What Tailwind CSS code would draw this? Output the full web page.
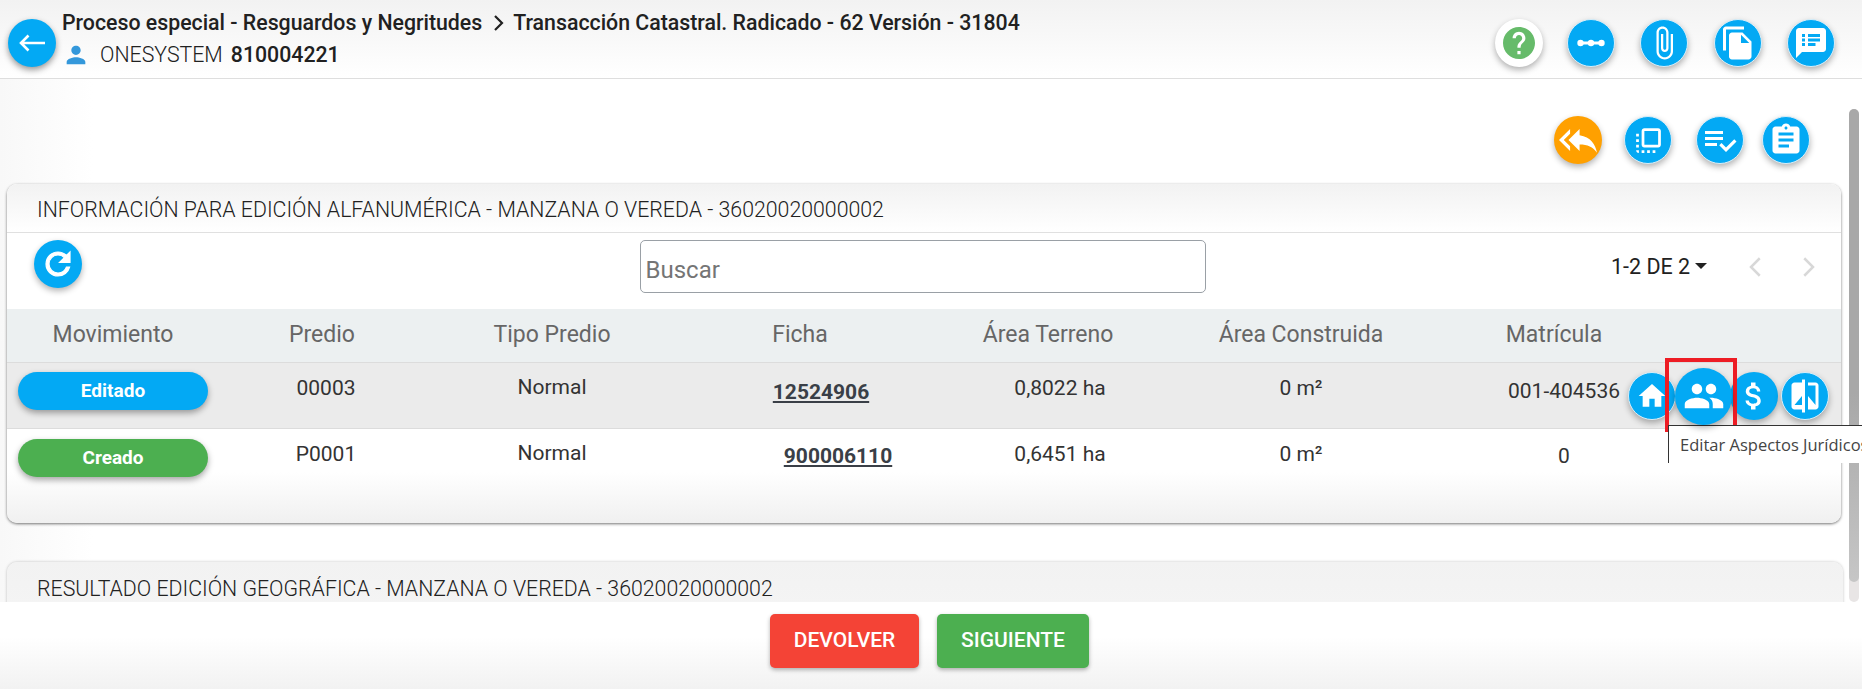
<!DOCTYPE html>
<html lang="es">
<head>
<meta charset="utf-8">
<title>Transacción Catastral</title>
<script src="https://cdn.jsdelivr.net/npm/@tailwindcss/browser@4"></script>
</head>
<body class="font-['Roboto',sans-serif] bg-white text-[#212121]">
<div class="relative flex h-[689px] w-[1862px] flex-col overflow-hidden">

  <!-- Header -->
  <header class="flex h-[79px] shrink-0 items-start border-b border-[#dedede] bg-gradient-to-b from-[#f2f2f2] to-white pl-[8px] pr-[27px]">
    <button class="mt-[19px] flex h-[48px] w-[48px] shrink-0 items-center justify-center rounded-full bg-[#03a9f4] shadow-[0_3px_6px_rgba(0,0,0,0.4)]">
      <svg viewBox="0 0 28 18" class="h-[18px] w-[28px] fill-none stroke-white stroke-[2.6]"><path d="M27 9H3M10.5 1.5L3 9l7.5 7.5"/></svg>
    </button>
    <div class="ml-[6px] mt-[9px] flex flex-col">
      <div class="flex h-[27px] items-center text-[21.3px] font-medium text-[#212121]">
        <span>Proceso especial - Resguardos y Negritudes</span>
        <svg viewBox="0 0 24 24" class="mx-[3.5px] h-[24px] w-[24px] fill-none stroke-[#212121] stroke-[2.2]"><path d="M9 5l7 7-7 7"/></svg>
        <span>Transacción Catastral. Radicado - 62 Versión - 31804</span>
      </div>
      <div class="mt-[5px] flex h-[28px] items-center text-[21.3px]">
        <svg viewBox="0 0 24 24" class="h-[28px] w-[28px] fill-[#3498db]"><path d="M12 12c2.21 0 4-1.79 4-4s-1.79-4-4-4-4 1.79-4 4 1.79 4 4 4zm0 2c-2.67 0-8 1.34-8 4v2h16v-2c0-2.66-5.33-4-8-4z"/></svg>
        <span class="ml-[10px] font-light">ONESYSTEM</span>
        <span class="ml-[8px] font-medium">810004221</span>
      </div>
    </div>
    <div class="ml-auto mt-[19px] flex items-center gap-[25.5px]">
      <button class="mr-[-2px] flex h-[48px] w-[48px] items-center justify-center rounded-full bg-white shadow-[0_3px_6px_rgba(0,0,0,0.3)]">
        <svg viewBox="2 2 20 20" class="h-[32px] w-[32px] fill-[#66bb6a]"><path d="M12 2C6.48 2 2 6.48 2 12s4.48 10 10 10 10-4.48 10-10S17.52 2 12 2zm1 17h-2v-2h2v2zm2.07-7.75l-.9.92C13.45 12.9 13 13.5 13 15h-2v-.5c0-1.1.45-2.1 1.17-2.83l1.24-1.26c.37-.36.59-.86.59-1.41 0-1.1-.9-2-2-2s-2 .9-2 2H8c0-2.21 1.79-4 4-4s4 1.79 4 4c0 .88-.36 1.68-.93 2.25z"/></svg>
      </button>
      <button class="flex h-[48px] w-[48px] items-center justify-center rounded-full border border-[#d8eef9] bg-[#03a9f4] shadow-[0_3px_6px_rgba(0,0,0,0.3)]">
        <svg viewBox="0 0 32 32" class="h-[32px] w-[32px] fill-white"><rect x="3" y="14.5" width="26" height="3" rx="1.5"/><circle cx="5.5" cy="16" r="3.2"/><circle cx="16" cy="16" r="3.2"/><circle cx="26.5" cy="16" r="3.2"/></svg>
      </button>
      <button class="flex h-[48px] w-[48px] items-center justify-center rounded-full border border-[#d8eef9] bg-[#03a9f4] shadow-[0_3px_6px_rgba(0,0,0,0.3)]">
        <svg viewBox="0 0 24 24" class="h-[36px] w-[36px] fill-white"><path d="M16.5 6v11.5c0 2.21-1.79 4-4 4s-4-1.79-4-4V5c0-1.38 1.12-2.5 2.5-2.5s2.5 1.12 2.5 2.5v10.5c0 .55-.45 1-1 1s-1-.45-1-1V6H10v9.5c0 1.38 1.12 2.5 2.5 2.5s2.5-1.12 2.5-2.5V5c0-2.21-1.79-4-4-4S7 2.79 7 5v12.5c0 3.04 2.46 5.5 5.5 5.5s5.5-2.46 5.5-5.5V6h-1.5z"/></svg>
      </button>
      <button class="flex h-[48px] w-[48px] items-center justify-center rounded-full border border-[#d8eef9] bg-[#03a9f4] shadow-[0_3px_6px_rgba(0,0,0,0.3)]">
        <svg viewBox="0 0 24 24" class="h-[36px] w-[36px] fill-white"><path d="M16 1H4c-1.1 0-2 .9-2 2v14h2V3h12V1zm-1 4l6 6v10c0 1.1-.9 2-2 2H7.99C6.89 23 6 22.1 6 21l.01-14c0-1.1.89-2 1.99-2h7zm-1 7h5.5L14 6.5V12z"/></svg>
      </button>
      <button class="flex h-[48px] w-[48px] items-center justify-center rounded-full border border-[#d8eef9] bg-[#03a9f4] shadow-[0_3px_6px_rgba(0,0,0,0.3)]">
        <svg viewBox="0 0 24 24" class="h-[36px] w-[36px] fill-white"><path d="M20 2H4c-1.1 0-1.99.9-1.99 2L2 22l4-4h14c1.1 0 2-.9 2-2V4c0-1.1-.9-2-2-2zM8 14H6v-2h2v2zm0-3H6V9h2v2zm0-3H6V6h2v2zm7 6h-5v-2h5v2zm3-3h-8V9h8v2zm0-3h-8V6h8v2z"/></svg>
      </button>
    </div>
  </header>

  <!-- Main -->
  <main class="flex min-h-0 flex-1 flex-col bg-gradient-to-r from-[#f8f8f8] via-white via-[5%] to-white pl-[7px] pr-[19px]">
    <div class="flex h-[105px] shrink-0 items-start justify-end pr-[33px] pt-[37px]">
      <button class="flex h-[48px] w-[48px] items-center justify-center rounded-full bg-[#ffa000] shadow-[0_3px_6px_rgba(0,0,0,0.3)]">
        <svg viewBox="0 0 24 24" class="h-[38px] w-[38px] fill-white"><path d="M7 8V5l-7 7 7 7v-3l-4-4 4-4zm6 1V5l-7 7 7 7v-4.1c5 0 8.5 1.6 11 5.1-1-5-4-10-11-11z"/></svg>
      </button>
      <button class="ml-[22px] flex h-[48px] w-[48px] items-center justify-center rounded-full border border-[#d8eef9] bg-[#03a9f4] shadow-[0_3px_6px_rgba(0,0,0,0.3)]">
        <svg viewBox="0 0 24 24" class="h-[33px] w-[33px] fill-white"><path d="M3 13h2v-2H3v2zm0 4h2v-2H3v2zm2 4v-2H3c0 1.1.89 2 2 2zM3 9h2V7H3v2zm12 12h2v-2h-2v2zm4-18H9c-1.11 0-2 .9-2 2v10c0 1.1.89 2 2 2h10c1.1 0 2-.9 2-2V5c0-1.1-.9-2-2-2zm0 12H9V5h10v10zm-8 6h2v-2h-2v2zm-4 0h2v-2H7v2z"/></svg>
      </button>
      <button class="ml-[24px] flex h-[48px] w-[48px] items-center justify-center rounded-full border border-[#d8eef9] bg-[#03a9f4] shadow-[0_3px_6px_rgba(0,0,0,0.3)]">
        <svg viewBox="0 0 24 24" class="h-[36px] w-[36px] fill-white"><path d="M14 10H2v2h12v-2zm0-4H2v2h12V6zM2 16h8v-2H2v2zm19.5-4.5L23 13l-6.99 7-4.51-4.5L13 14l3.01 3 5.49-5.5z"/></svg>
      </button>
      <button class="ml-[18px] flex h-[48px] w-[48px] items-center justify-center rounded-full border border-[#d8eef9] bg-[#03a9f4] shadow-[0_3px_6px_rgba(0,0,0,0.3)]">
        <svg viewBox="0 0 24 24" class="h-[36px] w-[36px] fill-white"><path d="M19 3h-4.18C14.4 1.84 13.3 1 12 1c-1.3 0-2.4.84-2.82 2H5c-1.1 0-2 .9-2 2v14c0 1.1.9 2 2 2h14c1.1 0 2-.9 2-2V5c0-1.1-.9-2-2-2zm-7 0c.55 0 1 .45 1 1s-.45 1-1 1-1-.45-1-1 .45-1 1-1zm2 14H7v-2h7v2zm3-4H7v-2h10v2zm0-4H7V7h10v2z"/></svg>
      </button>
    </div>

    <!-- Card 1 -->
    <section class="mr-[2px] h-[339px] shrink-0 rounded-[10px] bg-gradient-to-b from-white from-[85%] to-[#f0f0f0] shadow-[0_1px_3px_rgba(0,0,0,0.55)]">
      <div class="flex h-[49px] items-center rounded-t-[10px] border-b border-[#e0e0e0] bg-gradient-to-b from-[#f2f2f2] to-white pl-[30px] pt-[3px] text-[21.3px] font-light text-[#212121]">INFORMACIÓN PARA EDICIÓN ALFANUMÉRICA - MANZANA O VEREDA - 36020020000002</div>
      <div class="relative flex h-[76px] items-start justify-center">
        <button class="absolute left-[27px] top-[7px] flex h-[48px] w-[48px] items-center justify-center rounded-full bg-[#03a9f4] shadow-[0_3px_6px_rgba(0,0,0,0.3)]">
          <svg viewBox="0 0 24 24" class="h-[36px] w-[36px] fill-white stroke-white stroke-[0.8]"><path d="M17.65 6.35C16.2 4.9 14.21 4 12 4c-4.42 0-7.99 3.58-7.99 8s3.57 8 7.99 8c3.73 0 6.84-2.55 7.73-6h-2.08c-.82 2.33-3.04 4-5.65 4-3.31 0-6-2.69-6-6s2.69-6 6-6c1.66 0 3.14.69 4.22 1.78L13 11h7V4l-2.35 2.35z"/></svg>
        </button>
        <input placeholder="Buscar" class="ml-[-3px] mt-[7px] h-[53px] w-[566px] rounded-[5px] border-[1.5px] border-[#9aa0a6] bg-white px-[5px] pt-[7px] text-[24px] outline-none placeholder:text-[#757575]">
        <div class="absolute left-[1604px] top-[18px] flex items-center text-[21.5px] text-[#212121]">
          <span>1-2 DE 2</span>
          <span class="ml-[5px] mt-[-2px] h-0 w-0 border-x-[6px] border-t-[6px] border-x-transparent border-t-[#212121]"></span>
        </div>
        <svg viewBox="0 0 24 24" class="absolute left-[1734px] top-[19px] h-[30px] w-[30px] fill-none stroke-[#d8d8d8] stroke-2"><path d="M15 5l-7 7 7 7"/></svg>
        <svg viewBox="0 0 24 24" class="absolute left-[1786px] top-[19px] h-[30px] w-[30px] fill-none stroke-[#d8d8d8] stroke-2"><path d="M9 5l7 7-7 7"/></svg>
      </div>

      <div class="grid h-[54px] grid-cols-[212px_206px_254px_242px_254px_252px_254px_1fr] items-center border-b border-[#dcdcdc] bg-[#ecf0f1] text-center text-[23px] text-[#666]">
        <div>Movimiento</div><div>Predio</div><div>Tipo Predio</div><div>Ficha</div><div>Área Terreno</div><div>Área Construida</div><div>Matrícula</div><div></div>
      </div>

      <div class="relative grid h-[66px] grid-cols-[212px_206px_254px_242px_254px_252px_254px_1fr] items-start border-b border-[#dcdcdc] bg-[#ebebeb] text-center text-[21px] text-[#333]">
        <div class="pl-[11px] pt-[9px]"><span class="flex h-[38px] w-[190px] items-center justify-center rounded-full bg-[#03a9f4] text-[19px] font-bold text-white shadow-[0_3px_6px_rgba(0,0,0,0.35)]">Editado</span></div>
        <div class="pl-[8px] pt-[10px]">00003</div>
        <div class="pt-[9px]">Normal</div>
        <div class="pl-[42px] pt-[14px] font-bold text-[#3a3f47] underline underline-offset-2">12524906</div>
        <div class="pl-[24px] pt-[10px]">0,8022 ha</div>
        <div class="pt-[10px]">0 m²</div>
        <div class="pl-[20px] pt-[13px]">001-404536</div>
        <div></div>
        <div class="absolute left-[1621px] top-[0px] flex h-[66px] items-center">
          <button class="z-0 flex h-[48px] w-[48px] items-center justify-center rounded-full border border-[#d8eef9] bg-[#03a9f4] shadow-[0_3px_6px_rgba(0,0,0,0.3)]">
            <svg viewBox="0 0 24 24" class="h-[32px] w-[32px] fill-white"><path d="M10 20v-6h4v6h5v-8h3L12 3 2 12h3v8z"/></svg>
          </button>
          <button class="z-10 ml-[-1px] flex h-[57px] w-[57px] items-center justify-center rounded-full bg-[#03a9f4] shadow-[0_3px_6px_rgba(0,0,0,0.3)]">
            <svg viewBox="0 0 24 24" class="h-[42px] w-[42px] fill-white"><path d="M16 11c1.66 0 2.99-1.34 2.99-3S17.66 5 16 5c-1.66 0-3 1.34-3 3s1.34 3 3 3zm-8 0c1.66 0 2.99-1.34 2.99-3S9.66 5 8 5C6.34 5 5 6.34 5 8s1.34 3 3 3zm0 2c-2.33 0-7 1.17-7 3.5V19h14v-2.5c0-2.33-4.67-3.5-7-3.5zm8 0c-.29 0-.62.02-.97.05 1.16.84 1.97 1.97 1.97 3.45V19h6v-2.5c0-2.33-4.67-3.5-7-3.5z"/></svg>
          </button>
          <button class="z-0 ml-[-2px] flex h-[48px] w-[48px] items-center justify-center rounded-full bg-[#03a9f4] shadow-[0_3px_6px_rgba(0,0,0,0.3)]">
            <svg viewBox="0 0 24 24" class="h-[36px] w-[36px] fill-white"><path d="M11.8 10.9c-2.27-.59-3-1.2-3-2.15 0-1.09 1.01-1.85 2.7-1.85 1.78 0 2.44.85 2.5 2.1h2.21c-.07-1.72-1.12-3.3-3.21-3.81V3h-3v2.16c-1.94.42-3.5 1.68-3.5 3.61 0 2.31 1.91 3.46 4.7 4.13 2.5.6 3 1.48 3 2.41 0 .69-.49 1.79-2.7 1.79-2.06 0-2.87-.92-2.98-2.1h-2.2c.12 2.19 1.76 3.42 3.68 3.83V21h3v-2.15c1.95-.37 3.5-1.5 3.5-3.55 0-2.84-2.43-3.81-4.7-4.4z"/></svg>
          </button>
          <button class="z-0 ml-[3px] flex h-[48px] w-[48px] items-center justify-center rounded-full border border-[#d8eef9] bg-[#03a9f4] shadow-[0_3px_6px_rgba(0,0,0,0.3)]">
            <svg viewBox="0 0 24 24" class="h-[36px] w-[36px] fill-white"><path d="M10 3H5c-1.1 0-2 .9-2 2v14c0 1.1.9 2 2 2h5v2h2V1h-2v2zm0 15H5l5-6v6zm9-15h-5v2h5v13l-5-6v9h5c1.1 0 2-.9 2-2V5c0-1.1-.9-2-2-2z"/></svg>
          </button>
        </div>
      </div>

      <div class="grid h-[66px] grid-cols-[212px_206px_254px_242px_254px_252px_254px_1fr] items-start text-center text-[21px] text-[#333]">
        <div class="pl-[11px] pt-[10px]"><span class="flex h-[38px] w-[190px] items-center justify-center rounded-full bg-[#4caf50] text-[19px] font-bold text-white shadow-[0_3px_6px_rgba(0,0,0,0.35)]">Creado</span></div>
        <div class="pl-[8px] pt-[10px]">P0001</div>
        <div class="pt-[9px]">Normal</div>
        <div class="pl-[76px] pt-[12px] font-bold text-[#3a3f47] underline underline-offset-2">900006110</div>
        <div class="pl-[24px] pt-[10px]">0,6451 ha</div>
        <div class="pt-[10px]">0 m²</div>
        <div class="pl-[20px] pt-[12px]">0</div>
        <div></div>
      </div>
    </section>

    <!-- Card 2 -->
    <section class="mt-[39px] flex-1 rounded-t-[10px] bg-gradient-to-b from-[#f2f2f2] to-[#f4f4f4] pl-[30px] pt-[11px] text-[21.3px] font-light text-[#212121] shadow-[0_0_3px_rgba(0,0,0,0.25)]">RESULTADO EDICIÓN GEOGRÁFICA - MANZANA O VEREDA - 36020020000002</section>
  </main>

  <!-- Footer -->
  <footer class="flex h-[87px] shrink-0 items-start justify-center gap-[18px] bg-gradient-to-b from-white from-[40%] to-[#f2f2f2] pr-[3px] pt-[12px]">
    <button class="flex h-[54px] w-[149px] items-center justify-center rounded-[5px] bg-[#f44336] text-[21px] font-medium text-white shadow-[0_2px_4px_rgba(0,0,0,0.3)]">DEVOLVER</button>
    <button class="flex h-[54px] w-[152px] items-center justify-center rounded-[5px] bg-[#4caf50] text-[21px] font-medium text-white shadow-[0_2px_4px_rgba(0,0,0,0.3)]">SIGUIENTE</button>
  </footer>

  <!-- Overlays -->
  <div class="absolute left-[1849px] top-[109px] h-[493px] w-[10px] rounded-[5px] bg-[#e8e5e5]">
    <div class="h-[473px] rounded-[5px] bg-gradient-to-b from-[#a8a8a8] from-[60%] to-[#c6c6c6]"></div>
  </div>
  <div class="absolute left-[1665px] top-[358px] h-[74px] w-[72px] border-[4px] border-[#ed1c24]"></div>
  <div class="absolute left-[1668px] top-[425px] flex h-[38px] w-[194px] items-start overflow-hidden whitespace-nowrap border-l border-t border-[#333] bg-white pl-[11px] pt-[7px] font-['Open_Sans',sans-serif] text-[16.5px] text-[#444]">Editar Aspectos Jurídicos</div>
</div>
</body>
</html>
